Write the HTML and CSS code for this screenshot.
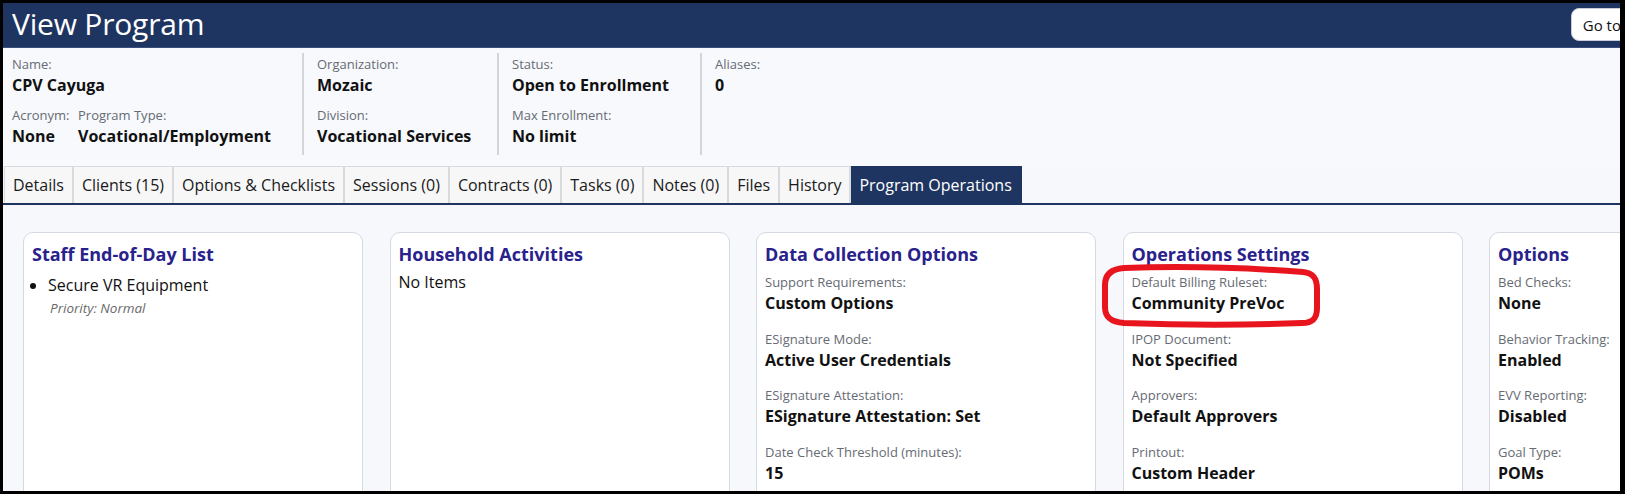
FILE: index.html
```html
<!DOCTYPE html>
<html lang="en">
<head>
<meta charset="utf-8">
<title>View Program</title>
<link rel="stylesheet" href="styles.css">
</head>
<body>
<div class="frame">
  <header class="titlebar">
    <h1>View Program</h1>
    <button class="goto">Go to</button>
  </header>

  <section class="info">
    <div class="info-col first">
      <div class="field"><div class="label">Name:</div><div class="value">CPV Cayuga</div></div>
      <div class="pair">
        <div class="field acr"><div class="label">Acronym:</div><div class="value">None</div></div>
        <div class="field"><div class="label">Program Type:</div><div class="value">Vocational/Employment</div></div>
      </div>
    </div>
    <div class="info-col second">
      <div class="field"><div class="label">Organization:</div><div class="value">Mozaic</div></div>
      <div class="field"><div class="label">Division:</div><div class="value">Vocational Services</div></div>
    </div>
    <div class="info-col third">
      <div class="field"><div class="label">Status:</div><div class="value">Open to Enrollment</div></div>
      <div class="field"><div class="label">Max Enrollment:</div><div class="value">No limit</div></div>
    </div>
    <div class="info-col fourth">
      <div class="field"><div class="label">Aliases:</div><div class="value">0</div></div>
    </div>
  </section>

  <nav class="tabs">
    <div class="tab">Details</div>
    <div class="tab">Clients (15)</div>
    <div class="tab">Options &amp; Checklists</div>
    <div class="tab">Sessions (0)</div>
    <div class="tab">Contracts (0)</div>
    <div class="tab">Tasks (0)</div>
    <div class="tab">Notes (0)</div>
    <div class="tab">Files</div>
    <div class="tab">History</div>
    <div class="tab active">Program Operations</div>
  </nav>

  <main class="cards">
    <div class="card">
      <h2>Staff End-of-Day List</h2>
      <ul class="items">
        <li>Secure VR Equipment<div class="priority">Priority: Normal</div></li>
      </ul>
    </div>
    <div class="card">
      <h2>Household Activities</h2>
      <div class="empty">No Items</div>
    </div>
    <div class="card">
      <h2>Data Collection Options</h2>
      <div class="fields">
        <div class="cfield"><div class="label">Support Requirements:</div><div class="value">Custom Options</div></div>
        <div class="cfield"><div class="label">ESignature Mode:</div><div class="value">Active User Credentials</div></div>
        <div class="cfield"><div class="label">ESignature Attestation:</div><div class="value">ESignature Attestation: Set</div></div>
        <div class="cfield"><div class="label">Date Check Threshold (minutes):</div><div class="value">15</div></div>
      </div>
    </div>
    <div class="card">
      <h2>Operations Settings</h2>
      <div class="fields">
        <div class="cfield"><div class="label">Default Billing Ruleset:</div><div class="value">Community PreVoc</div></div>
        <div class="cfield"><div class="label">IPOP Document:</div><div class="value">Not Specified</div></div>
        <div class="cfield"><div class="label">Approvers:</div><div class="value">Default Approvers</div></div>
        <div class="cfield"><div class="label">Printout:</div><div class="value">Custom Header</div></div>
      </div>
      <svg class="highlight" width="222" height="64" viewBox="0 0 222 64" aria-hidden="true">
        <path d="M24 4 C 80 2, 150 4, 203 8 C 214 9, 217 15, 217 25 L 217 44 C 217 54, 213 59, 202 59 C 150 61, 80 61, 24 59 C 10 58, 5 53, 5 43 L 5 21 C 5 11, 11 5, 24 4 Z" fill="none" stroke="#e8151f" stroke-width="6" stroke-linejoin="round"/>
      </svg>
    </div>
    <div class="card">
      <h2>Options</h2>
      <div class="fields">
        <div class="cfield"><div class="label">Bed Checks:</div><div class="value">None</div></div>
        <div class="cfield"><div class="label">Behavior Tracking:</div><div class="value">Enabled</div></div>
        <div class="cfield"><div class="label">EVV Reporting:</div><div class="value">Disabled</div></div>
        <div class="cfield"><div class="label">Goal Type:</div><div class="value">POMs</div></div>
      </div>
    </div>
  </main>
</div>
</body>
</html>
```
FILE: styles.css
```css
* { box-sizing: border-box; }

html, body {
  margin: 0;
  padding: 0;
  background: #000;
}

body {
  font-family: "Open Sans", "Noto Sans", "DejaVu Sans", sans-serif;
  color: #111;
}

.frame {
  width: 1625px;
  height: 494px;
  border-style: solid;
  border-color: #000;
  border-width: 3px 5px 3px 3px;
  overflow: hidden;
  background: #f6f8fc;
  display: flex;
  flex-direction: column;
}

/* Title bar */
.titlebar {
  flex: none;
  height: 45px;
  background: #1f3561;
  border-bottom: 1px solid #3a4f7d;
  display: flex;
  justify-content: space-between;
  align-items: flex-start;
  padding-left: 9px;
}

.titlebar h1 {
  margin: 0;
  font-size: 30px;
  font-weight: 400;
  line-height: 42px;
  color: #fff;
  letter-spacing: -0.2px;
}

.goto {
  margin-top: 5px;
  margin-right: -12px;
  height: 33px;
  padding: 0 10px 0 11px;
  font-family: inherit;
  font-size: 15px;
  color: #111;
  background: #fff;
  border: 1px solid #c9cdd6;
  border-radius: 8px;
  white-space: nowrap;
}

/* Info section */
.info {
  flex: none;
  display: flex;
  padding: 5px 0 11px;
  background: #f7f9fd;
}

.info-col {
  display: flex;
  flex-direction: column;
  gap: 11px;
  padding: 3px 0 8px 13px;
  border-left: 2px solid #d3d5da;
}

.info-col.first {
  width: 299px;
  border-left: 0;
  padding-left: 9px;
}

.info-col.second { width: 195px; }
.info-col.third { width: 203px; }
.info-col.fourth { flex: 1; }

.pair {
  display: flex;
}

.pair .acr {
  width: 66px;
}

.label {
  font-size: 13px;
  line-height: 16px;
  color: #666b73;
  white-space: nowrap;
}

.value {
  margin-top: 2px;
  font-size: 16px;
  line-height: 22px;
  font-weight: 700;
  color: #111;
  white-space: nowrap;
}

/* Tabs */
.tabs {
  flex: none;
  display: flex;
  height: 39px;
  padding-left: 1px;
  border-bottom: 2px solid #1f3561;
}

.tab {
  height: 37px;
  display: flex;
  align-items: center;
  padding: 0 8px;
  font-size: 16px;
  color: #1a1a1a;
  background: #f7f7f8;
  border: 1px solid #d9dade;
  border-bottom: 0;
  border-right-width: 2px;
  white-space: nowrap;
}

.tab + .tab { border-left: 0; }

.tab.active {
  background: #1f3561;
  border-color: #1f3561;
  color: #fff;
}

/* Cards */
.cards {
  flex: 1;
  display: grid;
  grid-template-columns: repeat(5, 340px);
  column-gap: 26.5px;
  align-items: start;
  padding: 27px 0 0 20px;
}

.card {
  position: relative;
  height: 320px;
  background: #fff;
  border: 1px solid #d5d9e3;
  border-radius: 10px;
  padding: 9px 8px;
}

.card h2 {
  margin: 0;
  font-size: 18px;
  line-height: 24px;
  font-weight: 700;
  color: #29218c;
  white-space: nowrap;
}

.items {
  margin: 9px 0 0;
  padding: 0 0 0 16px;
  font-size: 16px;
  line-height: 20px;
  color: #111;
}

.priority {
  margin-top: 5px;
  margin-left: 2px;
  font-size: 13.5px;
  line-height: 16px;
  font-style: italic;
  color: #6a6a6a;
}

.empty {
  margin-top: 6px;
  font-size: 16px;
  line-height: 20px;
  color: #111;
}

.fields {
  margin-top: 8px;
  display: flex;
  flex-direction: column;
  gap: 16.5px;
}

.cfield .value {
  margin-top: 2px;
}

.highlight {
  position: absolute;
  left: -24px;
  top: 31px;
}
```
